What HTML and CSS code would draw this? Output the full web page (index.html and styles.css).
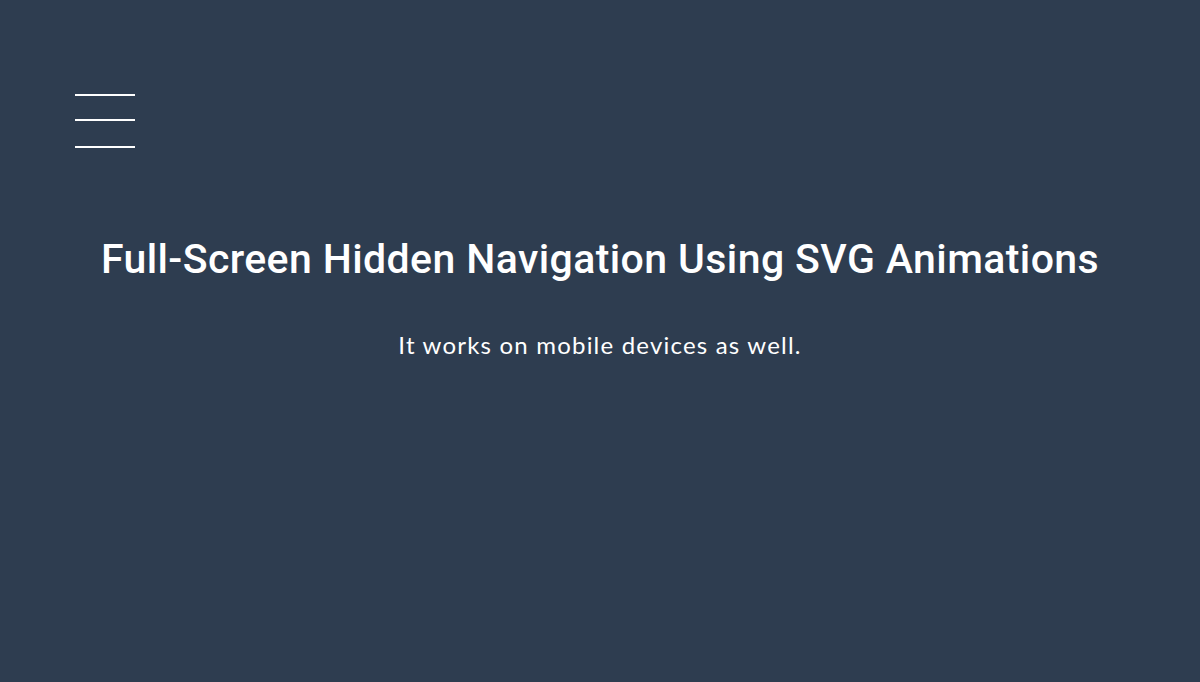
FILE: index.html
```html
<!DOCTYPE html>
<html>
<head>
<meta charset="utf-8">
<link rel="stylesheet" href="styles.css">
</head>
<body>
<div class="page">
  <button class="menu" aria-label="menu">
    <svg width="60" height="56" viewBox="0 0 60 56">
      <rect x="0" y="0" width="60" height="2" fill="#fff"/>
      <rect x="0" y="25" width="60" height="2" fill="#fff"/>
      <rect x="0" y="52" width="60" height="2" fill="#fff"/>
    </svg>
  </button>
  <h1 class="title">Full-Screen Hidden Navigation Using SVG Animations</h1>
  <p class="subtitle">It works on mobile devices as well.</p>
</div>
</body>
</html>
```
FILE: styles.css
```css
html, body {
  margin: 0;
  padding: 0;
  background: #2e3d50;
  height: 100%;
}
.page {
  padding: 94px 0 0 0;
  color: #fff;
}
.menu {
  display: block;
  margin: 0 0 0 75px;
  padding: 0;
  border: 0;
  background: none;
  line-height: 0;
}
.title {
  margin: 85px 0 0 0;
  text-align: center;
  font-family: Roboto, sans-serif;
  font-weight: 500;
  font-size: 41px;
  letter-spacing: 0.4px;
  line-height: 48px;
}
.subtitle {
  margin: 47px 0 0 0;
  text-align: center;
  font-family: Lato, sans-serif;
  font-size: 24px;
  letter-spacing: 1.2px;
  line-height: 30px;
}
```
